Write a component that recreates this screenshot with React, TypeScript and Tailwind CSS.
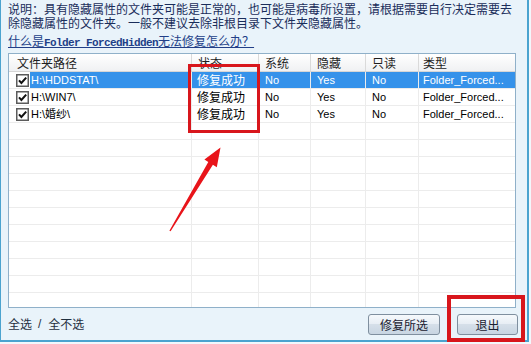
import React from "react";

const rows = [
  { path: "H:\\HDDSTAT\\", sel: true },
  { path: "H:\\WIN7\\", sel: false },
  { path: "H:\\婚纱\\", sel: false },
];

function Check() {
  return (
    <svg width="13" height="13" viewBox="0 0 13 13" className="shrink-0">
      <rect x="0.75" y="0.75" width="11.5" height="11.5" fill="#fff" stroke="#5b5b5b" strokeWidth="1.5" />
      <path d="M3 6.3 L5.4 9 L10.2 3.6" stroke="#111" strokeWidth="2" fill="none" />
    </svg>
  );
}

const cjk = "font-['Noto_Sans_CJK_SC','Liberation_Sans',sans-serif]";
const lat = "font-['Liberation_Sans','Noto_Sans_CJK_SC',sans-serif]";

export default function App() {
  return (
    <div className="relative w-[531px] h-[344px] overflow-hidden bg-[#f2f8fc]">
      <div className="w-[529px] h-[342px] bg-[#e9f3fa] border-l border-r-2 border-b-2 border-[#4ba3cf] flex flex-col px-[7px]">
        <div className={`${cjk} text-[12px] leading-[14px] text-[#1a2d5a] pt-[2px] whitespace-nowrap`}>
          <div>说明：具有隐藏属性的文件夹可能是正常的，也可能是病毒所设置，请根据需要自行决定需要去</div>
          <div>除隐藏属性的文件夹。一般不建议去除非根目录下文件夹隐藏属性。</div>
        </div>
        <div className={`${cjk} mt-[4px] text-[12px] leading-[14px] text-[#223f88] underline whitespace-nowrap`}>
          什么是<span className="font-['Liberation_Mono',monospace] text-[11px] tracking-[-0.6px] font-bold">Folder ForcedHidden</span>无法修复怎么办？
        </div>
        <div className="mt-[3px] w-[508px] h-[255px] border border-[#8fb0c9] bg-white flex flex-col overflow-hidden">
          <div className={`${cjk} h-[18px] shrink-0 flex text-[12px] text-[#1e1e1e] bg-[linear-gradient(#ffffff,#f0f1f3)] border-b border-[#d6d6d6]`}>
            <div className="w-[183px] pl-[8px] flex items-center border-r border-[#dadada]">文件夹路径</div>
            <div className="w-[67px] pl-[6px] flex items-center border-r border-[#dadada]">状态</div>
            <div className="w-[52px] pl-[6px] flex items-center border-r border-[#dadada]">系统</div>
            <div className="w-[55px] pl-[6px] flex items-center border-r border-[#dadada]">隐藏</div>
            <div className="w-[53px] pl-[6px] flex items-center border-r border-[#dadada]">只读</div>
            <div className="flex-1 pl-[4px] flex items-center">类型</div>
          </div>
          {rows.map((r) => (
            <div key={r.path} className="h-[17px] shrink-0 flex border-b border-[#ececec]">
              <div className="w-[21px] pl-[7px] flex items-center bg-white">
                <Check />
              </div>
              <div className={`flex-1 flex ${r.sel ? "bg-[#3592ea] text-white" : "text-black"}`}>
                <div className={`${lat} w-[162px] pl-[1px] flex items-center text-[11px] border-r border-[#ececec]`}>{r.path}</div>
                <div className={`${cjk} w-[67px] pl-[5px] flex items-center text-[12px] border-r border-[#ececec]`}>修复成功</div>
                <div className={`${lat} w-[52px] pl-[6px] flex items-center text-[11px] border-r border-[#ececec]`}>No</div>
                <div className={`${lat} w-[55px] pl-[6px] flex items-center text-[11px] border-r border-[#ececec]`}>Yes</div>
                <div className={`${lat} w-[53px] pl-[6px] flex items-center text-[11px] border-r border-[#ececec]`}>No</div>
                <div className={`${lat} flex-1 pl-[4px] flex items-center text-[11px] whitespace-nowrap`}>Folder_Forced...</div>
              </div>
            </div>
          ))}
          {Array.from({ length: 11 }).map((_, i) => (
            <div key={i} className="h-[17px] shrink-0 flex border-b border-[#ececec]">
              <div className="w-[183px] border-r border-[#ececec]" />
              <div className="w-[67px] border-r border-[#ececec]" />
              <div className="w-[52px] border-r border-[#ececec]" />
              <div className="w-[55px] border-r border-[#ececec]" />
              <div className="w-[53px] border-r border-[#ececec]" />
              <div className="flex-1" />
            </div>
          ))}
        </div>
        <div className={`${cjk} flex-1 flex items-center text-[12px] text-[#1f2f3f]`}>
          <span>全选</span>
          <span className={`${lat} ml-[6px] mr-[7px]`}>/</span>
          <span>全不选</span>
          <div className="ml-auto mr-[2px] flex gap-[17px] pt-[1px]">
            <button className="w-[72px] h-[21px] rounded-[3px] border border-[#7f8f9f] bg-[linear-gradient(#f6f9fc,#e6edf4_50%,#d5dfe9_50%,#c8d5e2)] text-[12px] text-[#1a2030] flex items-center justify-center">修复所选</button>
            <button className="w-[61px] h-[21px] rounded-[3px] border border-[#7f8f9f] bg-[linear-gradient(#f6f9fc,#e6edf4_50%,#d5dfe9_50%,#c8d5e2)] text-[12px] text-[#1a2030] flex items-center justify-center">退出</button>
          </div>
        </div>
      </div>
      <div className="absolute left-[188px] top-[64px] w-[72px] h-[69px] border-[3px] border-[#d8161c]" />
      <div className="absolute left-[447px] top-[295px] w-[78px] h-[47px] border-[4px] border-[#d8161c]" />
      <svg className="absolute left-0 top-0" width="531" height="344" viewBox="0 0 531 344">
        <polygon
          points="170.6,231.3 212.9,164.8 216.8,167.2 220.5,147.5 204.4,159.4 208.3,161.9 169.4,230.7"
          fill="#e8141a"
        />
      </svg>
    </div>
  );
}
